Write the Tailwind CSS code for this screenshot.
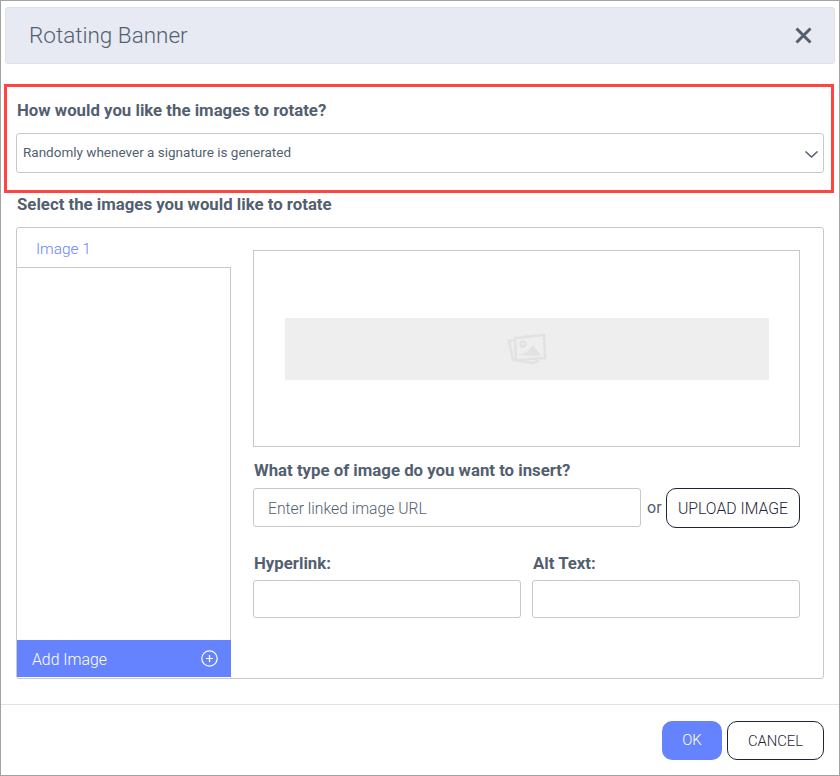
<!DOCTYPE html>
<html lang="en">
<head>
    <meta charset="UTF-8">
    <title>Rotating Banner</title>
    <script src="https://cdn.jsdelivr.net/npm/@tailwindcss/browser@4"></script>
</head>
<body class="bg-white font-[Roboto,sans-serif] text-[#535f70]">
    <div class="w-[840px] h-[776px] border border-[#a3a3a3] flex flex-col overflow-hidden">

        <!-- Header -->
        <div class="mt-[6px] ml-[4px] w-[830px] h-[57px] shrink-0 bg-[#e7eaf2] border border-[#dfe1e6] rounded-[3px] flex items-center justify-between pl-[23px] pr-[22px]">
            <span class="pt-[1px] text-[22.5px] font-light text-[#535f70]">Rotating Banner</span>
            <svg width="17" height="17" viewBox="0 0 17 17" class="block"><path d="M1.5 1.5 L15.5 15.5 M15.5 1.5 L1.5 15.5" stroke="#535f70" stroke-width="3"/></svg>
        </div>

        <!-- Rotate mode -->
        <div class="mt-[20px] ml-[3px] w-[830px] h-[109px] shrink-0 border-[3px] border-[#ff4444] pl-[9px] pr-[7px] pt-[14px]">
            <div class="ml-[1px] text-[16.8px] leading-[19px] font-bold">How would you like the images to rotate?</div>
            <div class="mt-[13px] h-[40px] border border-[#c8c8c8] rounded-[3px] flex items-center justify-between pl-[6px] pr-[5px] text-[13.5px]">
                <span class="mb-[2px]">Randomly whenever a signature is generated</span>
                <svg width="13" height="7" viewBox="0 0 13 7" class="block mt-[3px]"><path d="M0.5 0.5 L6.5 6 L12.5 0.5" fill="none" stroke="#535f70" stroke-width="1.5"/></svg>
            </div>
        </div>

        <div class="mt-[2px] ml-[16px] text-[16.8px] leading-[19px] font-bold">Select the images you would like to rotate</div>

        <!-- Images panel -->
        <div class="mt-[13px] ml-[15px] w-[808px] h-[452px] shrink-0 border border-[#c8c8c8] rounded-[3px] flex">
            <div class="w-[214px] shrink-0 flex flex-col">
                <div class="h-[39px] shrink-0 pl-[19px] pt-[12px] text-[15.4px] leading-[19px] font-light text-[#6683ff]">Image 1</div>
                <div class="flex-1 border-t border-r border-[#c8c8c8]"></div>
                <div class="h-[37px] shrink-0 bg-[#6683ff] flex items-center justify-between pl-[15px] pr-[13px] text-[15.8px] font-light text-white mb-[1px]">
                    <span class="pt-[3px]">Add Image</span>
                    <svg width="17" height="17" viewBox="0 0 17 17" class="block"><circle cx="8.5" cy="8.5" r="7.7" fill="none" stroke="#fff" stroke-width="1.2"/><path d="M8.5 5 V12 M5 8.5 H12" stroke="#fff" stroke-width="1.2"/></svg>
                </div>
            </div>

            <div class="ml-[22px] w-[547px] pt-[22px]">
                <div class="h-[197px] border border-[#c8c8c8] flex items-center justify-center">
                    <div class="w-[484px] h-[62px] bg-[#eeeeee] flex items-center justify-center">
                        <svg width="40" height="32" viewBox="0 0 40 32" class="block" fill="none" stroke="#e2e2e2" stroke-width="2.5">
                            <path d="M7 7 L2 8 L6 27 L25 30 L32 28"/>
                            <path d="M8 5 L37 2 L38 25 L9 27 Z"/>
                            <circle cx="16" cy="11" r="2.5"/>
                            <path d="M11 22 L20 19 L26 12 L34 23 Z" fill="#e2e2e2" stroke="none"/>
                        </svg>
                    </div>
                </div>

                <div class="mt-[14px] ml-[1px] text-[16.8px] leading-[19px] font-bold">What type of image do you want to insert?</div>
                <div class="mt-[8px] flex items-start">
                    <div class="w-[388px] h-[39px] pt-[2px] border border-[#c8c8c8] rounded-[3px] flex items-center pl-[14px] text-[15.7px] font-light">Enter linked image URL</div>
                    <span class="ml-[6px] w-[19px] text-[16px] leading-[39px]">or</span>
                    <div class="w-[134px] h-[40px] pt-[2px] border border-[#1f2437] rounded-[10px] flex items-center justify-center text-[15.8px] font-light text-[#1f2437]">UPLOAD IMAGE</div>
                </div>

                <div class="mt-[26px] grid grid-cols-[268px_268px] gap-x-[11px]">
                    <div>
                        <div class="ml-[1px] text-[16.8px] leading-[19px] font-bold">Hyperlink:</div>
                        <div class="mt-[7px] h-[38px] border border-[#c8c8c8] rounded-[3px]"></div>
                    </div>
                    <div>
                        <div class="ml-[1px] text-[16.8px] leading-[19px] font-bold">Alt Text:</div>
                        <div class="mt-[7px] h-[38px] border border-[#c8c8c8] rounded-[3px]"></div>
                    </div>
                </div>
            </div>
        </div>

        <!-- Footer -->
        <div class="mt-[25px] flex-1 border-t border-[#e3e3e3] flex justify-end items-start pt-[16px] pr-[15px] gap-[5px]">
            <div class="w-[60px] h-[39px] bg-[#6683ff] rounded-[10px] flex items-center justify-center text-[15px] font-light text-white">OK</div>
            <div class="w-[97px] h-[39px] pt-[2px] border border-[#1f2437] rounded-[10px] flex items-center justify-center text-[14.8px] font-light text-[#1f2437]">CANCEL</div>
        </div>
    </div>
</body>
</html>
